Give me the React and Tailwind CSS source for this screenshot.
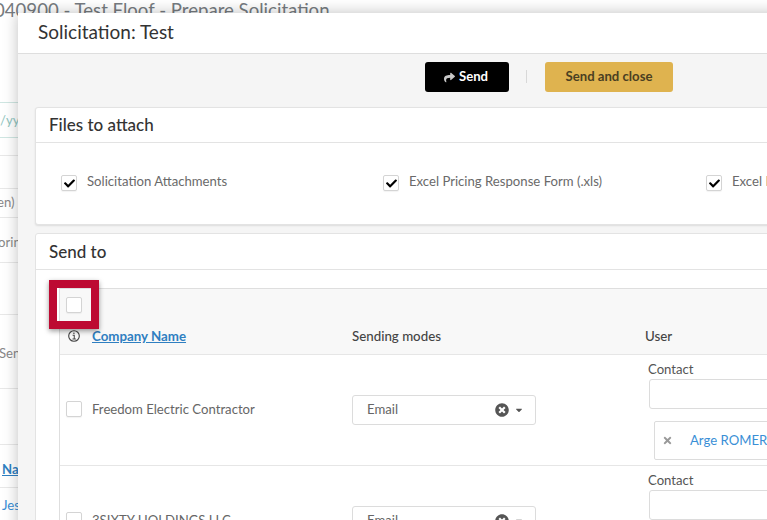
import React from "react";
import { FaShare, FaCheck, FaTimes, FaTimesCircle, FaCaretDown } from "react-icons/fa";

function Box({ checked }) {
  return (
    <span className="flex h-[16px] w-[16px] shrink-0 items-center justify-center rounded-[2px] border border-[#d4d4d4] bg-white shadow-[0_1px_1px_rgba(0,0,0,0.05)]">
      {checked && <FaCheck className="text-[11px] text-black" />}
    </span>
  );
}

function FileOption({ label, className }) {
  return (
    <div className={`flex h-[16px] shrink-0 items-center gap-[10px] ${className}`}>
      <Box checked />
      <span className="relative top-[-1px] whitespace-nowrap text-[13.15px] text-[#6a6a6a]">{label}</span>
    </div>
  );
}

function ModeSelect() {
  return (
    <div className="flex h-[30px] w-[184px] items-center rounded-[3px] border border-[#dcdcdc] bg-white pl-[14px] pr-[11px] text-[13.15px] text-[#666]">
      <span className="flex-1">Email</span>
      <FaTimesCircle className="text-[14px] text-[#555]" />
      <FaCaretDown className="ml-[5px] text-[10px] text-[#555]" />
    </div>
  );
}

function Row({ name, selected }) {
  return (
    <div className="flex h-[111px] border-b border-[#e6e6e6]">
      <div className="flex w-[292px] shrink-0 pl-[6px] pt-[46px]">
        <Box />
        <span className="relative top-[-1px] ml-[10px] whitespace-nowrap text-[13.15px] text-[#666]">{name}</span>
      </div>
      <div className="w-[297px] shrink-0 pt-[40px]">
        <ModeSelect />
      </div>
      <div className="flex-1 pt-[5px]">
        <div className="ml-[-1px] text-[13.15px] leading-[18px] text-[#555]">Contact</div>
        <div className="mt-[1px] h-[30px] w-[300px] rounded-[3px] border border-[#dcdcdc] bg-white" />
        {selected && (
          <div className="ml-[5px] mt-[12px] flex h-[39px] w-[300px] items-center rounded-[2px] border border-[#dcdcdc] bg-white pl-[7px] text-[13.15px]">
            <FaTimes className="text-[11px] text-[#999]" />
            <span className="ml-[17px] whitespace-nowrap text-[#3a8fd6]">Arge ROMERO</span>
          </div>
        )}
      </div>
    </div>
  );
}

function Backdrop() {
  return (
    <div className="absolute inset-0 bg-white text-[13.15px] text-[#888]">
      <div className="h-[106px] border-b border-[#cfe6e2]">
        <div className="ml-[-6px] mt-[-3px] whitespace-nowrap text-[18.6px] leading-[26px] text-[#767b80]">
          040900 - Test Floof - Prepare Solicitation
        </div>
      </div>
      <div className="h-[35px] border-b border-[#cfe6e2] pt-[8px] leading-[18px] text-[#8fc5c0]">/yy</div>
      <div className="h-[18px] border-b border-[#e8e8e8]" />
      <div className="h-[33px] border-b border-[#e8e8e8]" />
      <div className="h-[29px] border-b border-[#e8e8e8] pt-[4px] leading-[18px]"><span className="ml-[-3px]">en)</span></div>
      <div className="h-[45px] border-b border-[#e8e8e8] pt-[15px] leading-[18px]"><span className="ml-[-2px]">orin</span></div>
      <div className="h-[52px] border-b border-[#e8e8e8]" />
      <div className="h-[74px] border-b border-[#e8e8e8] pt-[29px] leading-[18px]"><span className="ml-[-1px]">Send</span></div>
      <div className="h-[56px] border-b border-[#e8e8e8]" />
      <div className="h-[43px] border-b border-[#e8e8e8] pt-[15px] leading-[18px]">
        <span className="ml-[2px] font-bold text-[#2f7fc1] underline">Name</span>
      </div>
      <div className="pt-[8px] leading-[18px] text-[#3a8fd6]"><span className="ml-[2px]">Jesse</span></div>
    </div>
  );
}

export default function App() {
  return (
    <div className="relative h-[520px] w-[767px] overflow-hidden bg-white font-['Lato','Open_Sans',sans-serif]">
      <Backdrop />
      <div className="absolute left-[18px] top-[13px] w-[800px] bg-[#f5f5f5] shadow-[0_0_14px_rgba(0,0,0,0.25)]">
        <header className="flex h-[41px] items-center border-b border-[#dedede] bg-white pl-[20px]">
          <h1 className="relative top-[-1px] text-[19px] text-[#333]">Solicitation: Test</h1>
        </header>
        <div className="flex h-[53px] items-start pl-[407px] pt-[8px]">
          <button className="flex h-[30px] w-[84px] items-center justify-center gap-[4px] pr-[2px] rounded-[3px] bg-black text-[13.15px] font-bold text-white">
            <FaShare className="text-[11px] text-[#c8c8c8]" />
            Send
          </button>
          <span className="ml-[17px] mr-[18px] mt-[8px] h-[13px] w-px bg-[#d8d8d8]" />
          <button className="h-[30px] w-[128px] rounded-[3px] bg-[#dfb34f] text-[13.15px] font-bold text-[#4a3f22]">
            Send and close
          </button>
        </div>
        <div className="px-[17px]">
          <section className="rounded-[3px] border border-[#e3e3e3] bg-white shadow-[0_1px_2px_rgba(0,0,0,0.1)]">
            <div className="flex h-[35px] items-center border-b border-[#e3e3e3] pl-[13px] text-[17px] font-medium text-[#333]">
              Files to attach
            </div>
            <div className="flex h-[81px] pl-[25px] pt-[32px]">
              <FileOption label="Solicitation Attachments" className="w-[322px]" />
              <FileOption label="Excel Pricing Response Form (.xls)" className="w-[323px]" />
              <FileOption label="Excel Pricing Response Form (.xlsx)" />
            </div>
          </section>
          <section className="mt-[8px] rounded-[3px] border border-[#e3e3e3] bg-white">
            <div className="flex h-[36px] items-center border-b border-[#e3e3e3] pl-[13px] text-[17px] font-medium text-[#333]">
              Send to
            </div>
            <div className="relative ml-[23px] mt-[18px] border-l border-t border-[#dedede]">
              <div className="border-b border-[#e6e6e6] bg-[#f8f8f8]">
                <div className="pl-[6px] pt-[8px]"><Box /></div>
                <div className="flex h-[41px] items-start pt-[14px] text-[13.3px] leading-[18px]">
                  <div className="flex h-[18px] w-[292px] shrink-0 items-center pl-[8px]">
                    <svg width="12" height="12" viewBox="0 0 14 14" className="text-[#444]" fill="none" stroke="currentColor">
                      <circle cx="7" cy="7" r="6.2" strokeWidth="1.3" />
                      <path d="M5.4 6.2H7.3V10.4M5.2 10.4H9.2" strokeWidth="1.2" />
                      <circle cx="6.9" cy="3.9" r="0.9" fill="currentColor" stroke="none" />
                    </svg>
                    <span className="ml-[12px] font-bold text-[#2f7fc1] underline">Company Name</span>
                  </div>
                  <div className="w-[293px] shrink-0 font-medium text-[#444]">Sending modes</div>
                  <div className="font-medium text-[#444]">User</div>
                </div>
              </div>
              <Row name="Freedom Electric Contractor" selected />
              <Row name="3SIXTY HOLDINGS LLC" />
              <div className="absolute left-[-11px] top-[-9px] h-[49px] w-[50px] border-[8px] border-[#bd0a32] shadow-[0_2px_5px_rgba(0,0,0,0.4)]" />
            </div>
          </section>
        </div>
      </div>
    </div>
  );
}
